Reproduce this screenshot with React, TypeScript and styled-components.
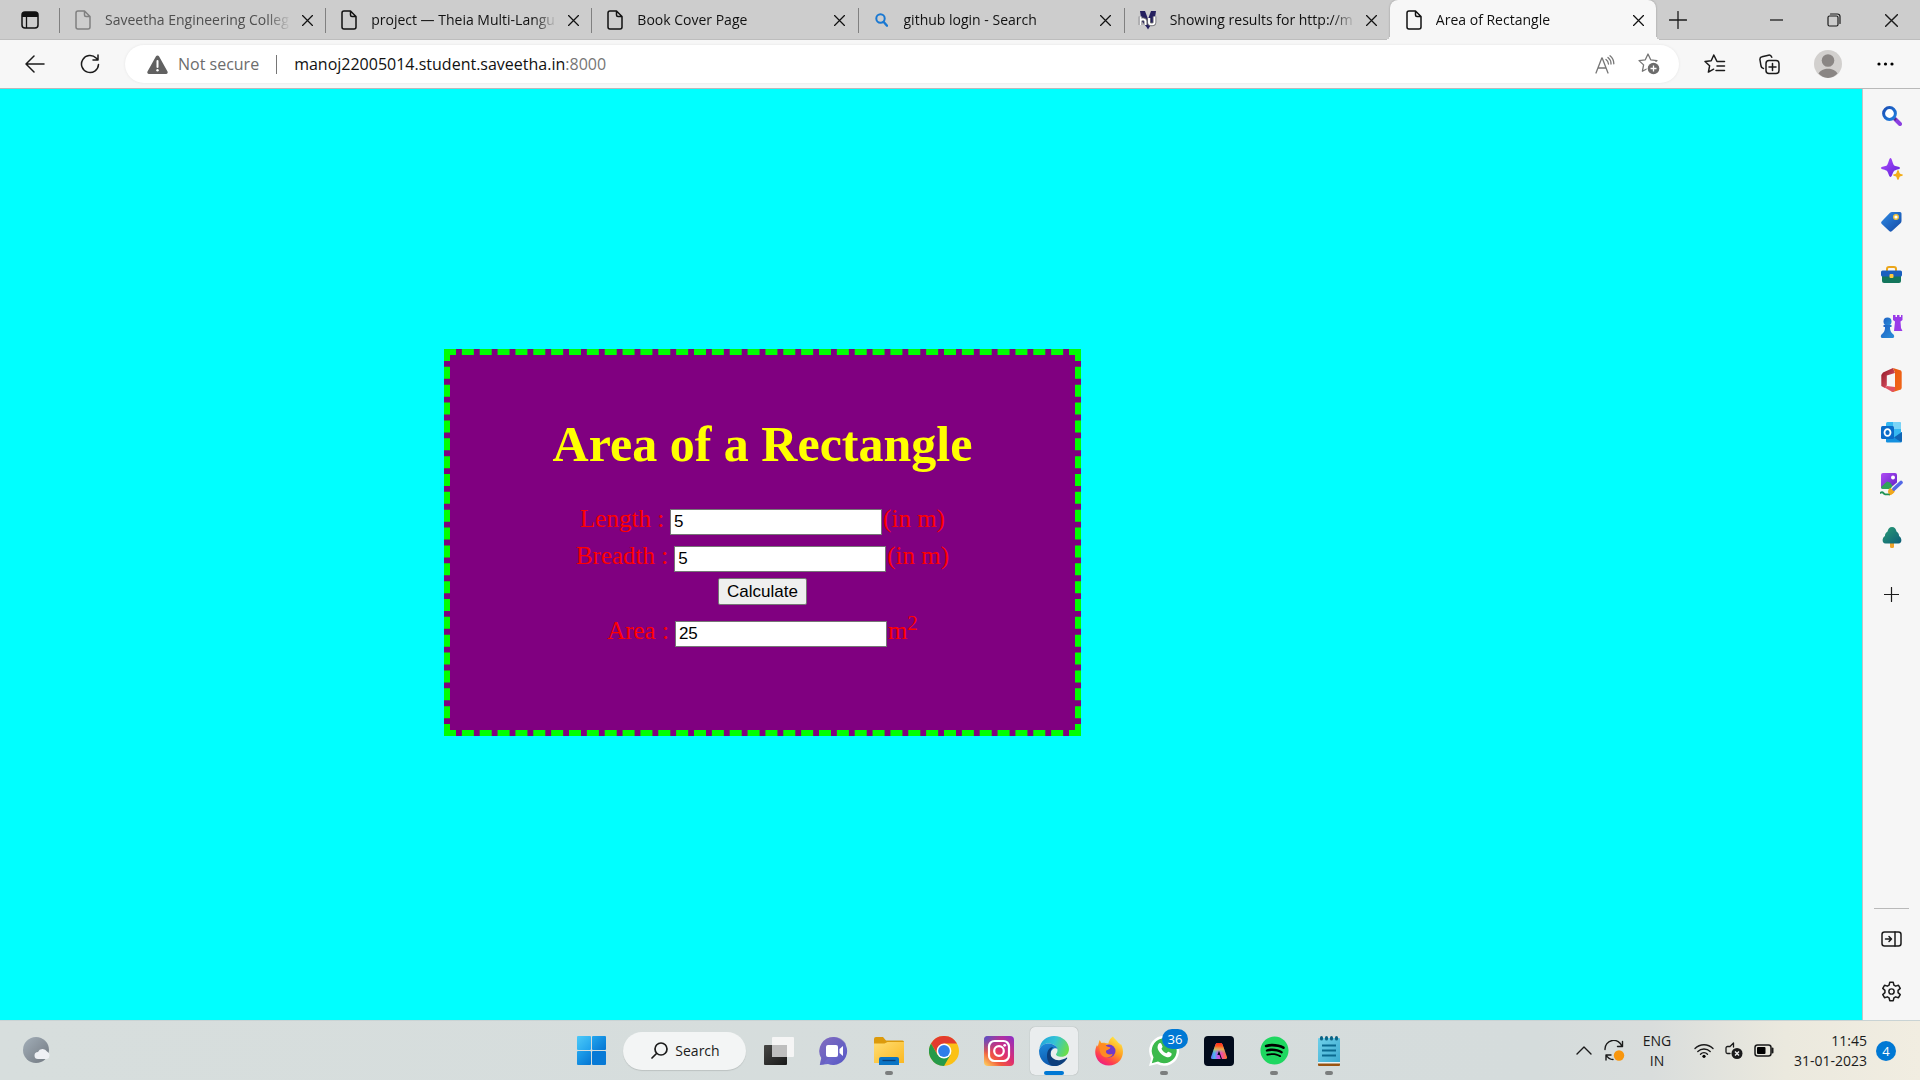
import React, { useState } from "react";
import styled, { createGlobalStyle, css } from "styled-components";
import { FaSpotify } from "react-icons/fa";

const GlobalStyle = createGlobalStyle`
  * { box-sizing: border-box; }
  html, body { margin: 0; padding: 0; }
  body { font-family: "Open Sans", "Noto Sans", sans-serif; color: #1b1b1b; }
  button { font: inherit; color: inherit; }
  svg { display: block; flex: none; }
`;

const Desktop = styled.div`
  display: flex;
  flex-direction: column;
  min-height: 100vh;
`;

/* ---------- Tab strip ---------- */

const TabStrip = styled.header`
  display: flex;
  height: 40px;
  background: #cdcdcd;
  box-shadow: inset 0 -1px 0 #bdbdbd;
`;

const PlainButton = styled.button`
  display: flex;
  align-items: center;
  justify-content: center;
  flex: none;
  padding: 0;
  border: 0;
  background: transparent;
`;

const StripButton = styled(PlainButton)<{ $width: number }>`
  width: ${(p) => p.$width}px;
  height: 40px;
`;

const Tabs = styled.nav`
  display: flex;
  flex: 0 1 1597px;
  min-width: 0;
`;

const Tab = styled.div<{ $active?: boolean; $dim?: boolean }>`
  position: relative;
  display: flex;
  align-items: center;
  flex: 1 1 0;
  min-width: 0;
  padding: 0 8px 0 14px;
  color: ${(p) => (p.$dim ? "#4f4f4f" : "#111")};
  ${(p) =>
    p.$active
      ? css`
          background: #f7f7f7;
          border-radius: 8px 8px 0 0;
          box-shadow: 0 0 2px rgba(0, 0, 0, 0.3);
          clip-path: inset(0 -6px 0 -6px);
          &::before,
          &::after {
            content: "";
            position: absolute;
            bottom: 0;
            width: 5px;
            height: 5px;
          }
          &::before {
            left: -5px;
            background: radial-gradient(circle at 0 0, transparent 5px, #f7f7f7 5px);
          }
          &::after {
            right: -5px;
            background: radial-gradient(circle at 100% 0, transparent 5px, #f7f7f7 5px);
          }
        `
      : css`
          &::before {
            content: "";
            position: absolute;
            left: 0;
            top: 8px;
            width: 1px;
            height: 25px;
            background: #808080;
          }
        `}
`;

const Favicon = styled.span`
  display: flex;
  align-items: center;
  justify-content: center;
  width: 20px;
  flex: none;
`;

const TabTitle = styled.span`
  flex: 1;
  min-width: 0;
  margin: 0 6px 0 12px;
  overflow: hidden;
  white-space: nowrap;
  font-size: 14px;
  line-height: 20px;
  mask-image: linear-gradient(to right, #000 calc(100% - 24px), transparent);
`;

const TabClose = styled(PlainButton)`
  width: 20px;
  height: 20px;
  color: #111;
`;

const WindowControls = styled.div`
  display: flex;
  margin-left: auto;
`;

/* ---------- Toolbar ---------- */

const Toolbar = styled.div`
  display: flex;
  align-items: center;
  height: 49px;
  padding: 0 7px;
  background: #f7f7f7;
  border-bottom: 1px solid #b9b9b9;
`;

const ToolButton = styled(PlainButton)`
  width: 55px;
  height: 40px;
`;

const ProfileButton = styled(ToolButton)`
  margin: 0 3px;
`;

const AddressBar = styled.div`
  display: flex;
  align-items: center;
  flex: 1;
  min-width: 0;
  height: 38px;
  margin: 0 8px;
  padding: 0 8px 0 22px;
  background: #fff;
  border-radius: 19px;
  box-shadow: 0 0 3px rgba(0, 0, 0, 0.08);
  font-size: 16px;
  line-height: 24px;
  white-space: nowrap;
`;

const Security = styled.span`
  display: flex;
  align-items: center;
  gap: 10px;
  padding-right: 18px;
  margin-right: 17px;
  color: #6c6c6c;
  position: relative;
  &::after {
    content: "";
    position: absolute;
    right: 0;
    top: 3px;
    width: 1px;
    height: 19px;
    background: #767676;
  }
`;

const Url = styled.span`
  flex: 1;
  color: #111;
`;

const Port = styled.span`
  color: #767676;
`;

const AddressButton = styled(PlainButton)`
  width: 44px;
  height: 36px;
`;

/* ---------- Page and sidebar ---------- */

const Body = styled.div`
  display: flex;
  flex: 1;
`;

const Page = styled.main`
  flex: 1;
  min-width: 0;
  background: cyan;
  padding: 260px 0 0 444px;
`;

const Card = styled.form`
  width: 637px;
  max-width: 100%;
  padding: 61px 0 81px;
  background: purple;
  border: 6px dashed lime;
  font-family: "Liberation Serif", "Times New Roman", serif;
  text-align: center;
`;

const Title = styled.h1`
  margin: 0 0 27px;
  color: yellow;
  font-size: 50px;
  line-height: 57px;
`;

const Row = styled.div`
  display: flex;
  align-items: baseline;
  justify-content: center;
  height: 37px;
  color: red;
  font-size: 25px;
  line-height: 37px;
`;

const ButtonRow = styled(Row)`
  align-items: flex-start;
  height: 38px;
  padding-top: 4px;
`;

const Label = styled.label`
  margin-right: 6px;
`;

const Unit = styled.span`
  margin-left: 1px;
`;

const NumberBox = styled.input`
  width: 212px;
  height: 26px;
  padding: 1px 3px;
  border: 1px solid #767676;
  background: #fff;
  color: #000;
  font-family: "Liberation Sans", Arial, sans-serif;
  font-size: 17px;
`;

const Superscript = styled.sup`
  font-size: 21px;
  line-height: 0;
`;

const Calculate = styled.button`
  height: 27px;
  padding: 0 8px;
  border: 1px solid #767676;
  border-radius: 2px;
  background: #efefef;
  color: #000;
  font-family: "Liberation Sans", Arial, sans-serif;
  font-size: 17px;
  line-height: 20px;
`;

const Sidebar = styled.aside`
  display: flex;
  flex-direction: column;
  align-items: center;
  width: 58px;
  flex: none;
  background: #f6f6f6;
  border-left: 1px solid #c4c4c4;
`;

const SideApps = styled.div`
  display: grid;
  grid-template-rows: repeat(9, 1fr);
  height: 475px;
  padding-top: 1px;
`;

const SideButton = styled(PlainButton)`
  width: 48px;
`;

const SideAdd = styled(SideButton)`
  height: 60px;
`;

const SideFooter = styled.div`
  display: flex;
  flex-direction: column;
  align-items: center;
  margin-top: auto;
  padding: 3px 0 2px;
  border-top: 1px solid #b9b9b9;
  width: 35px;
`;

const FooterButton = styled(SideButton)`
  height: 53px;
`;

/* ---------- Taskbar ---------- */

const Taskbar = styled.footer`
  display: grid;
  grid-template-columns: 1fr auto 1fr;
  align-items: center;
  height: 60px;
  border-top: 1px solid #c9d3d4;
  background: linear-gradient(to right, #d7dedd 0%, #d5dcdc 80%, #d9dddc 86%, #ebe9de 93%, #f1ede1 100%);
`;

const Weather = styled(PlainButton)`
  width: 48px;
  height: 48px;
  margin-left: 13px;
`;

const Launchers = styled.div`
  display: flex;
  align-items: center;
  gap: 7px;
`;

const Launcher = styled(PlainButton)<{ $state?: "running" | "active" }>`
  position: relative;
  width: 48px;
  height: 48px;
  border-radius: 5px;
  ${(p) =>
    p.$state === "active" &&
    css`
      background: #eaedee;
      box-shadow: 0 0 1px rgba(0, 0, 0, 0.35);
    `}
  ${(p) =>
    p.$state &&
    css`
      &::after {
        content: "";
        position: absolute;
        left: 50%;
        bottom: 0;
        width: ${p.$state === "active" ? 20 : 8}px;
        height: 4px;
        border-radius: 2px;
        background: ${p.$state === "active" ? "#0078d4" : "#7b7e7e"};
        transform: translateX(-50%);
      }
    `}
`;

const SearchPill = styled(PlainButton)`
  gap: 7px;
  width: 123px;
  height: 38px;
  margin: 0 2px 0 1px;
  padding-left: 2px;
  border-radius: 19px;
  background: #f3f5f5;
  box-shadow: 0 1px 1px rgba(0, 0, 0, 0.12);
  font-size: 14px;
`;

const CountBadge = styled.span`
  position: absolute;
  top: 2px;
  right: 0;
  width: 26px;
  height: 20px;
  border-radius: 10px;
  background: #0078d4;
  color: #fff;
  font-size: 13px;
  line-height: 20px;
  text-align: center;
`;

const Tray = styled.div`
  display: flex;
  align-items: center;
  justify-content: flex-end;
  padding-right: 24px;
`;

const TrayButton = styled(PlainButton)`
  width: 30px;
  height: 48px;
`;

const TrayText = styled.button`
  padding: 0;
  border: 0;
  background: transparent;
  font-size: 14px;
  line-height: 20px;
`;

const Language = styled(TrayText)`
  width: 56px;
  margin-right: 4px;
  text-align: center;
`;

const Clock = styled(TrayText)`
  width: 88px;
  text-align: right;
`;

const Line = styled.span`
  display: block;
`;

const Notifications = styled(PlainButton)`
  width: 20px;
  height: 20px;
  margin-left: 9px;
  border-radius: 50%;
  background: #0078d4;
  color: #fff;
  font-size: 13px;
`;

/* ---------- Icons ---------- */

const stroke = (w = 1.4) => ({
  fill: "none",
  stroke: "currentColor",
  strokeWidth: w,
  strokeLinecap: "round" as const,
  strokeLinejoin: "round" as const,
});

const Svg = ({ w, h = w, vb, children }: { w: number; h?: number; vb?: string; children: React.ReactNode }) => (
  <svg width={w} height={h} viewBox={vb ?? `0 0 ${w} ${h}`} aria-hidden="true">
    {children}
  </svg>
);

const PageIcon = ({ color = "#111" }: { color?: string }) => (
  <Svg w={16} h={20}>
    <path d="M3 1h6.5L15 6.500V17a2 2 0 0 1-2 2H3a2 2 0 0 1-2-2V3a2 2 0 0 1 2-2zM9.500 1v4a1.500 1.500 0 0 0 1.500 1.500h4" fill="none" stroke={color} strokeWidth="1.5" strokeLinejoin="round" />
  </Svg>
);

const CloseIcon = ({ size = 11 }: { size?: number }) => (
  <Svg w={size} vb="0 0 10 10">
    <path d="M.5.5l9 9M9.500.5l-9 9" {...stroke(1.1)} />
  </Svg>
);

const TabActionsIcon = () => (
  <Svg w={18} h={18}>
    <rect x="1" y="1" width="16" height="16" rx="3" fill="none" stroke="#111" strokeWidth="1.5" />
    <path d="M1 6V4a3 3 0 0 1 3-3h10a3 3 0 0 1 3 3v2z" fill="#111" />
    <path d="M5.500 5v12" stroke="#111" strokeWidth="1.3" />
  </Svg>
);

const SearchFavicon = () => (
  <Svg w={13} h={14}>
    <circle cx="5.500" cy="5.500" r="4.200" fill="none" stroke="#1978d2" strokeWidth="2" />
    <path d="M8.500 8.800l3.500 3.900" stroke="#1978d2" strokeWidth="2.400" strokeLinecap="round" />
  </Svg>
);

const UniversityFavicon = () => (
  <Svg w={20} h={20}>
    <path d="M2 1h5l3 8 3-8h5l-1.500 10L11.500 17 10 19.500 8.500 17 3.500 11z" fill="#25205f" />
    <g fill="none" stroke="#6d6d72" strokeWidth="3.600">
      <path d="M2.500 15V6.500M2.500 10.500c1.500-2 5-1.500 5 1V15" />
      <path d="M11 8v4.500c0 2.500 5.500 2.500 5.500 0V6.500" />
    </g>
    <g fill="none" stroke="#fff" strokeWidth="1.900">
      <path d="M2.500 15V6.500M2.500 10.500c1.500-2 5-1.500 5 1V15" />
      <path d="M11 8v4.500c0 2.500 5.500 2.500 5.500 0V6.500" />
    </g>
  </Svg>
);

const starPath = "M10 1l2.700 5.800 6.300.8-4.600 4.300 1.200 6.300L10 15.200 4.400 18.200l1.200-6.300L1 7.600l6.300-.8z";

const BackIcon = () => (
  <Svg w={20} h={18}><path d="M9 1L1 9l8 8M1 9h18" {...stroke(1.5)} /></Svg>
);
const ReloadIcon = () => (
  <Svg w={20} h={20}><path d="M18.500 10.500a8.500 8.500 0 1 1-2.400-6.400L18 6M18 1v5h-5" {...stroke(1.5)} /></Svg>
);
const WarningIcon = () => (
  <Svg w={21} h={19}>
    <path d="M9 1.300a1.700 1.700 0 0 1 3 0l8.500 15.200a1.600 1.600 0 0 1-1.500 2.400H2a1.600 1.600 0 0 1-1.500-2.400z" fill="#616161" />
    <path d="M10.500 6v6" stroke="#fff" strokeWidth="2" strokeLinecap="round" />
    <circle cx="10.500" cy="15.200" r="1.200" fill="#fff" />
  </Svg>
);
const ReadAloudIcon = () => (
  <Svg w={20} h={19}>
    <g {...stroke(1.3)} stroke="#767676">
      <path d="M1 18L6.800 3h.4L13 18M3 13h8" />
      <path d="M11 4.500a6 6 0 0 1 2.500 4.500M13 2.500a8 8 0 0 1 3 6.500M15 .8a10 10 0 0 1 3.800 8" />
    </g>
  </Svg>
);
const AddFavoriteIcon = () => (
  <Svg w={22} h={22}>
    <path d={starPath} fill="none" stroke="#767676" strokeWidth="1.3" strokeLinejoin="round" />
    <circle cx="15.500" cy="15.500" r="7" fill="#fff" />
    <circle cx="15.500" cy="15.500" r="5.800" fill="#6c6c6c" />
    <path d="M15.500 12.500v6M12.500 15.500h6" stroke="#fff" strokeWidth="1.300" />
  </Svg>
);
const FavoritesIcon = () => (
  <Svg w={22} h={20}>
    <path d="M20.500 7.500H13L9.800 1 7.200 6.700 1 7.500l4.600 4.300-1.200 6.300 5.200-2.900M13 12h7.500M12 16.500h8.500" {...stroke(1.5)} />
  </Svg>
);
const CollectionsIcon = () => (
  <Svg w={21} h={21}>
    <path d="M4.500 14.500c-2-.2-2.300-1.500-2.500-2.500L1 6c-.3-1.800.5-2.900 2-3.200l6.500-1.600c1.500-.4 2.600.3 3.300 2" {...stroke(1.5)} />
    <rect x="7" y="6.500" width="13" height="13" rx="3" {...stroke(1.5)} />
    <path d="M13.500 9.500v7M10 13h7" {...stroke(1.5)} />
  </Svg>
);
const ProfileIcon = () => (
  <Svg w={28} h={28}>
    <circle cx="14" cy="14" r="14" fill="#d2d0ce" />
    <circle cx="14" cy="10.500" r="6.300" fill="#8a8684" />
    <path d="M4.500 23.500c3-6.500 16-6.500 19 0A14 14 0 0 1 14 28a14 14 0 0 1-9.500-4.500z" fill="#8a8684" />
  </Svg>
);
const MoreIcon = () => (
  <Svg w={17} h={4}><circle cx="2" cy="2" r="1.600" /><circle cx="8.500" cy="2" r="1.600" /><circle cx="15" cy="2" r="1.600" /></Svg>
);

const Gradient = ({ id, from, to }: { id: string; from: string; to: string }) => (
  <linearGradient id={id} x1="0" y1="0" x2="1" y2="1">
    <stop offset="0" stopColor={from} />
    <stop offset="1" stopColor={to} />
  </linearGradient>
);

const sideApps: { name: string; icon: React.ReactNode }[] = [
  {
    name: "Search",
    icon: (
      <Svg w={20} h={20}>
        <Gradient id="lens" from="#1b4fb5" to="#1f7fe0" />
        <path d="M13 13l5 5" stroke="#8b3fe0" strokeWidth="4" strokeLinecap="round" />
        <path d="M11.500 11.500l2.500 2.500" stroke="#5b2f84" strokeWidth="2.500" />
        <circle cx="7.500" cy="7.500" r="5.900" fill="#fff" stroke="url(#lens)" strokeWidth="3" />
      </Svg>
    ),
  },
  {
    name: "Discover",
    icon: (
      <Svg w={22} h={22}>
        <Gradient id="spark" from="#b14cff" to="#5a22d6" />
        <path d="M9.500 0c1.500 0 2.200 6 3.500 7.300S19 8.500 19 10s-4.700 1.700-6 3-2 6-3.500 6-2.200-4.700-3.500-6-6-1.500-6-3 4.700-1.400 6-2.700S8 0 9.500 0z" fill="url(#spark)" />
        <path d="M17 12c1 0 1.200 2.800 1.900 3.500s3.100.5 3.100 1.500-2.400.9-3.100 1.600S18 22 17 22s-1.200-2.700-1.900-3.400S12 18 12 17s2.400-.8 3.100-1.500S16 12 17 12z" fill="#f3ad18" />
      </Svg>
    ),
  },
  {
    name: "Shopping",
    icon: (
      <Svg w={21} h={21}>
        <Gradient id="tag" from="#2f8ce6" to="#1347a3" />
        <path d="M11 1l8 0a1.500 1.500 0 0 1 1.500 1.500V10a3 3 0 0 1-1 2.200L11 20a2 2 0 0 1-2.800 0L.8 13a2 2 0 0 1 0-2.800L9 1.800A3 3 0 0 1 11 1z" fill="url(#tag)" />
        <circle cx="15" cy="6" r="2.300" fill="#fff" stroke="#f0c23a" strokeWidth="1.400" />
      </Svg>
    ),
  },
  {
    name: "Tools",
    icon: (
      <Svg w={21} h={17}>
        <path d="M6 5V3a2 2 0 0 1 2-2h5a2 2 0 0 1 2 2v2" fill="none" stroke="#eba61b" strokeWidth="2" />
        <path d="M1 8h19v7a2 2 0 0 1-2 2H3a2 2 0 0 1-2-2z" fill="#13765c" />
        <rect x="0" y="4.500" width="21" height="6" rx="1.500" fill="#1a5fc0" />
        <rect x="8.500" y="8" width="4" height="4" rx="1" fill="#ffc83d" />
      </Svg>
    ),
  },
  {
    name: "Games",
    icon: (
      <Svg w={23} h={23}>
        <Gradient id="pawn" from="#1e5fc4" to="#2a8fd8" />
        <path d="M13 0h2.500v2H17V0h2.500v2H21V0h1.500v5l-2 1.500.5 6.500 1.500 3H14l1-9.500-2-1.500z" fill="#9a3ae8" />
        <circle cx="7.500" cy="6.500" r="4" fill="url(#pawn)" />
        <path d="M3.500 10h8v2h-1.500c0 4 1 5.500 3.500 7.500 1 1 1 3.500-.5 3.500H2c-1.500 0-1.500-2.500-.5-3.500C4 17.500 5 16 5 12H3.500z" fill="url(#pawn)" />
      </Svg>
    ),
  },
  {
    name: "Microsoft 365",
    icon: (
      <Svg w={21} h={24}>
        <Gradient id="officeL" from="#8e1524" to="#ee5f73" />
        <Gradient id="officeR" from="#e8590c" to="#f2661b" />
        <path d="M12 0L2 4.500.3 7v11l3.500 2 2-2.500V7.500L14 5z" fill="url(#officeL)" />
        <path d="M12 0l8 2.500.7 1.500v16l-.7 1.500L12 24l-2-1 4-2V4.500z" fill="url(#officeR)" />
        <path d="M3.500 19.500L6 18l8 1v3.500L11.500 24z" fill="#e05263" />
      </Svg>
    ),
  },
  {
    name: "Outlook",
    icon: (
      <Svg w={21} h={21}>
        <rect x="5" y="0" width="15" height="15" rx="1.500" fill="#35b8f1" />
        <path d="M12 0h6.500A1.500 1.500 0 0 1 20 1.500V7h-8z" fill="#7ad4f7" />
        <path d="M5 10l8 5.500 8-5.500v9a1.500 1.500 0 0 1-1.500 1.500H6.500A1.500 1.500 0 0 1 5 18.500z" fill="#1490df" />
        <path d="M13 15.500l8-5.500v9l-1 1z" fill="#1066b5" />
        <rect x="0" y="4" width="13" height="13" rx="1.500" fill="#0a6cc9" />
        <ellipse cx="6.500" cy="10.500" rx="3" ry="3.400" fill="none" stroke="#fff" strokeWidth="1.800" />
      </Svg>
    ),
  },
  {
    name: "Image Creator",
    icon: (
      <Svg w={23} h={23}>
        <Gradient id="photo" from="#b04cf5" to="#5f1fc4" />
        <rect x="1" y="0" width="16" height="16" rx="2" fill="url(#photo)" />
        <path d="M1 14l6-5.500 3 1 5 6.500H3a2 2 0 0 1-2-2z" fill="#2fa35a" />
        <circle cx="13" cy="4.500" r="2" fill="#fff" />
        <path d="M9 22l-1-3c0-4 3-5 5-3s1 5-4 6z" fill="#f0a81c" />
        <path d="M14 15.500l7-6" stroke="#f6f6f6" strokeWidth="5.500" strokeLinecap="round" />
        <path d="M9 22.500c0-4 1-7 4-7s3 5-4 7z" fill="#f0a81c" />
        <path d="M14 16L21 9.500" stroke="#5368e6" strokeWidth="3.600" strokeLinecap="round" />
        <path d="M0 20c3-2 3 0 4.500 1S7 21 9 21.500" fill="none" stroke="#1f9254" strokeWidth="1.800" strokeLinecap="round" />
      </Svg>
    ),
  },
  {
    name: "Browser essentials",
    icon: (
      <Svg w={20} h={21}>
        <Gradient id="tree" from="#2a9d74" to="#0d5d78" />
        <rect x="8" y="14" width="4" height="7" rx="1.500" fill="#f0a32a" />
        <path d="M10 0c2.500 0 4 2 4.500 4.500C17 6 17 8 17 9c3 1.500 3.500 7-.5 7.500h-13C-.5 16 0 10.500 3 9c0-1 0-3 2.500-4.500C6 2 7.500 0 10 0z" fill="url(#tree)" />
      </Svg>
    ),
  },
];

const GearIcon = () => (
  <Svg w={21} h={21} vb="0 0 24 24">
    <path d="M10 1.500h4l.8 3.300 1.900 1.100 3.300-1 2 3.500-2.500 2.300v2.600l2.500 2.300-2 3.500-3.300-1-1.900 1.100-.8 3.300h-4l-.8-3.300-1.900-1.100-3.300 1-2-3.500 2.500-2.300v-2.600L2 8.400l2-3.500 3.300 1 1.900-1.100z" {...stroke(1.7)} />
    <circle cx="12" cy="12" r="3" {...stroke(1.7)} />
  </Svg>
);
const HideSidebarIcon = () => (
  <Svg w={21} h={16}>
    <rect x="1" y="1" width="19" height="14" rx="2.500" {...stroke(1.5)} />
    <path d="M14 1v14M4.500 8h6M8 5.500L10.500 8 8 10.500" {...stroke(1.5)} />
  </Svg>
);

const WindowsIcon = () => (
  <Svg w={29} h={29}>
    <Gradient id="winA" from="#4cc9f8" to="#1fa1ec" />
    <Gradient id="winB" from="#22a5ee" to="#0575d2" />
    <rect width="14" height="14" rx="1" fill="url(#winA)" />
    <rect x="15" width="14" height="14" rx="1" fill="url(#winB)" />
    <rect y="15" width="14" height="14" rx="1" fill="url(#winB)" />
    <rect x="15" y="15" width="14" height="14" rx="1" fill="#087ad6" />
  </Svg>
);
const TaskViewIcon = () => (
  <Svg w={30} h={28}>
    <Gradient id="tv" from="#474745" to="#191919" />
    <rect y="8" width="23" height="20" rx="1" fill="url(#tv)" />
    <rect x="8" width="22" height="20" rx="1" fill="#f5f5f5" />
    <path d="M8 8h15v12H9a1 1 0 0 1-1-1z" fill="#bebebe" />
  </Svg>
);
const ChatIcon = () => (
  <Svg w={30} h={30}>
    <Gradient id="chat" from="#7b5aa6" to="#5059c9" />
    <Gradient id="chat2" from="#8b7fd8" to="#5554c0" />
    <path d="M15 1a14 14 0 1 1-6 27L.8 29l1.500-7A14 14 0 0 1 15 1z" fill="url(#chat2)" />
    <path d="M15 1a14 14 0 0 0-12.700 21L.8 29l4-.5C8 20 20 16 27 8a14 14 0 0 0-12-7z" fill="url(#chat)" opacity=".5" />
    <rect x="7" y="9" width="12" height="12" rx="2" fill="#fff" />
    <path d="M20.500 13l3.500-3v10l-3.500-3z" fill="#fff" />
  </Svg>
);
const ExplorerIcon = () => (
  <Svg w={30} h={28}>
    <linearGradient id="fold" x1="0" y1="0" x2="1" y2="1"><stop stopColor="#ffdd72" /><stop offset="1" stopColor="#fbb822" /></linearGradient>
    <path d="M0 2a2 2 0 0 1 2-2h7l3 3.500h16.500A1.500 1.500 0 0 1 30 5v5H0z" fill="#dc9a0c" />
    <path d="M0 6.500h10.500L13.500 5H30v21H0z" fill="url(#fold)" />
    <path d="M5 28v-6a2 2 0 0 1 2-2h16a2 2 0 0 1 2 2v6z" fill="#0a74c4" />
    <path d="M8.500 23.500h13" stroke="#083f79" strokeWidth="1.300" />
  </Svg>
);
const ChromeIcon = () => (
  <Svg w={30} h={30}>
    <circle cx="15" cy="15" r="15" fill="#fbc116" />
    <path d="M2 7.500A15 15 0 0 1 28 7.500H15L9 19z" fill="#e33b2e" />
    <path d="M2 7.500A15 15 0 0 0 15 30l6.500-11.300H8.500z" fill="#269a49" />
    <circle cx="15" cy="15" r="7.400" fill="#fff" />
    <circle cx="15" cy="15" r="5.900" fill="#2f7de9" />
  </Svg>
);
const InstagramIcon = () => (
  <Svg w={30} h={30}>
    <linearGradient id="ig" x1="1" y1="0" x2=".1" y2="1">
      <stop offset="0" stopColor="#8a2fc9" /><stop offset=".5" stopColor="#de2f70" /><stop offset=".75" stopColor="#f1593e" /><stop offset="1" stopColor="#fdc65a" />
    </linearGradient>
    <radialGradient id="ig2" cx="0" cy="0" r=".6"><stop stopColor="#4a55d0" /><stop offset="1" stopColor="#4a55d0" stopOpacity="0" /></radialGradient>
    <rect width="30" height="30" rx="4" fill="url(#ig)" />
    <rect width="30" height="30" rx="4" fill="url(#ig2)" />
    <rect x="5" y="5" width="20" height="20" rx="5.500" fill="none" stroke="#fff" strokeWidth="2.200" />
    <circle cx="15" cy="15" r="4.800" fill="none" stroke="#fff" strokeWidth="2.200" />
    <circle cx="20.700" cy="9.300" r="1.400" fill="#fff" />
  </Svg>
);
const EdgeIcon = () => (
  <Svg w={30} h={30}>
    <linearGradient id="edgeT" x1="0" y1=".2" x2="1" y2=".5"><stop stopColor="#20a3dc" /><stop offset=".5" stopColor="#33c3d5" /><stop offset="1" stopColor="#6bdd4c" /></linearGradient>
    <linearGradient id="edgeB" x1="0" y1="0" x2=".3" y2="1"><stop stopColor="#1d8bdc" /><stop offset="1" stopColor="#0c58ad" /></linearGradient>
    <path d="M.3 13C1.500 5 7.500 0 15 0c9 0 15 6.500 15 13 0 5-3.500 7.800-7.500 7.800-4 0-5.500-1.600-5.500-2.600 0-.7 1.500-1.500 1.500-4C18.500 10 14 7.500 9.500 7.500 5 7.500 1.500 10 .3 13z" fill="url(#edgeT)" />
    <path d="M.1 14C1.500 9.500 5.500 7.500 9.500 7.500c4.500 0 8.500 2.500 9 5.500-1.500-1.800-7-.5-7 5.500 0 7 7 11 12.500 8-3 2.500-6 3.500-9 3.500C6 30-.6 23 .1 14z" fill="url(#edgeB)" />
    <path d="M8 20c0-6 3-9 6.500-9-2 1.500-3 4-3 6.500 0 4.500 5 7.500 10 6.500 2.500-.5 4.500-1.500 6-2.300.6-.3.9.1.6.7C26 26 21 30 15 30c-4 0-7-5-7-10z" fill="#0d3f7c" />
  </Svg>
);
const FirefoxIcon = () => (
  <Svg w={28} h={30}>
    <linearGradient id="ff" x1=".8" y1="0" x2=".2" y2="1"><stop stopColor="#fff04a" /><stop offset=".45" stopColor="#ff9a1f" /><stop offset=".75" stopColor="#ff3f4e" /><stop offset="1" stopColor="#e9178f" /></linearGradient>
    <path d="M18 .5c1 2 4 4 5.500 6.500 1-.2 1.500 1 1.500 2 .5-.6 1-1 1-1 3 6 2.500 12-1 16.500-6 7-17 6.500-22 0C-.5 19.500-.5 14 2 9l.8 1.500L4.500 4l2 3c1.500-.5 3-.5 4 0l3 .5C13.500 5 16 1.500 18 .5z" fill="url(#ff)" />
    <circle cx="14" cy="15" r="6.500" fill="#7139c9" />
    <path d="M5 7l6 1c-1 1.500 0 2.500 4.500 3.500-1 2.500-4 2-4.500 3.500-.5 3 3 4 6.500 3 0 3-7 5-10.500 1.500C4 16 4 10 5 7z" fill="#ff8a22" />
  </Svg>
);
const WhatsAppIcon = () => (
  <Svg w={30} h={30}>
    <path d="M0 30l2.200-7.600A15 15 0 1 1 8 28z" fill="#fff" />
    <path d="M2.800 27.200l1.700-6A12.500 12.500 0 1 1 9 25.600z" fill="#3cba4c" />
    <path d="M9.500 8c1-1.500 2.500-1 3 0l1 2.500c.3.800-1 1.800-1 2.300 1 2 2.500 3.500 4.800 4.500.6.2 1.400-1.800 2.200-1.500l2.600 1.300c1 .5.500 2.300-.5 3.200-1.500 1.300-3.500 1.200-6.600-.3-3-1.500-5.500-5-6.200-7-.6-2 0-3.700.7-5z" fill="#fff" />
  </Svg>
);
const AdobeExpressIcon = () => (
  <Svg w={30} h={30}>
    <linearGradient id="ae" x1="0" y1="0" x2="1" y2="0"><stop stopColor="#6d5cf5" /><stop offset=".2" stopColor="#45b8f0" /><stop offset=".4" stopColor="#b55cf0" /><stop offset=".65" stopColor="#f04ab0" /><stop offset="1" stopColor="#ff7a1f" /></linearGradient>
    <linearGradient id="ae2" x1="0" y1="0" x2="0" y2="1"><stop stopColor="#ff2a1a" /><stop offset=".2" stopColor="#ff5a1e" /><stop offset=".4" stopColor="#e8d030" stopOpacity=".7" /><stop offset=".65" stopColor="#60e080" stopOpacity="0" /></linearGradient>
    <rect width="30" height="30" rx="4" fill="#020b1c" />
    <path d="M13.500 7h3a2 2 0 0 1 1.900 1.200L23 21c.3 1-.2 2-1.300 2h-3.700l-3-8.500-1.600 4.500h2.100l1.300 4H8.300C7.200 23 6.700 22 7 21l4.600-12.800A2 2 0 0 1 13.500 7z" fill="url(#ae)" />
    <path d="M13.500 7h3a2 2 0 0 1 1.900 1.200L23 21c.3 1-.2 2-1.300 2h-3.700l-3-8.500-1.600 4.500h2.100l1.300 4H8.300C7.200 23 6.700 22 7 21l4.600-12.800A2 2 0 0 1 13.500 7z" fill="url(#ae2)" />
  </Svg>
);

const SpotifyFrame = styled.span`
  display: flex;
  border-radius: 50%;
  background: radial-gradient(circle, #000 12px, transparent 13px);
`;

const SpotifyIcon = () => (
  <SpotifyFrame>
    <FaSpotify size={29} color="#1ed760" aria-hidden="true" />
  </SpotifyFrame>
);
const NotepadIcon = () => (
  <Svg w={22} h={30}>
    <Gradient id="note" from="#6fd0ea" to="#3aa9cf" />
    <rect y="25" width="22" height="5" rx="1" fill="#9a5412" />
    <rect y="2" width="22" height="25" rx="1" fill="url(#note)" />
    <path d="M0 26h22v1.500H0z" fill="#e8f4f8" />
    <path d="M4 9.500h14M4 14.500h14M4 19.500h14" stroke="#0b6a90" strokeWidth="1.800" />
    {[3.5, 8.5, 13.5, 18.5].map((x) => (
      <rect key={x} x={x - 1.5} y="0" width="3" height="4.500" rx="1.500" fill="#0b6283" />
    ))}
  </Svg>
);
const WeatherIcon = () => (
  <Svg w={28} h={27}>
    <Gradient id="moon" from="#a3afb9" to="#717880" />
    <circle cx="13" cy="13" r="13" fill="url(#moon)" />
    <path d="M15 22a3.500 3.500 0 0 1 0-7 5 5 0 0 1 9-.5 4 4 0 0 1 0 7.500z" fill="#eef0f4" />
  </Svg>
);

const launchers: { name: string; icon: React.ReactNode; state?: "running" | "active"; badge?: number }[] = [
  { name: "Task view", icon: <TaskViewIcon /> },
  { name: "Chat", icon: <ChatIcon /> },
  { name: "File Explorer", icon: <ExplorerIcon />, state: "running" },
  { name: "Google Chrome", icon: <ChromeIcon /> },
  { name: "Instagram", icon: <InstagramIcon /> },
  { name: "Microsoft Edge", icon: <EdgeIcon />, state: "active" },
  { name: "Firefox", icon: <FirefoxIcon /> },
  { name: "WhatsApp", icon: <WhatsAppIcon />, state: "running", badge: 36 },
  { name: "Adobe Express", icon: <AdobeExpressIcon /> },
  { name: "Spotify", icon: <SpotifyIcon />, state: "running" },
  { name: "Notepad", icon: <NotepadIcon />, state: "running" },
];

const tabs: { title: string; icon: React.ReactNode; active?: boolean; dim?: boolean }[] = [
  { title: "Saveetha Engineering Colleg", icon: <PageIcon color="#808080" />, dim: true },
  { title: "project — Theia Multi-Langu", icon: <PageIcon /> },
  { title: "Book Cover Page", icon: <PageIcon /> },
  { title: "github login - Search", icon: <SearchFavicon /> },
  { title: "Showing results for http://m", icon: <UniversityFavicon /> },
  { title: "Area of Rectangle", icon: <PageIcon />, active: true },
];

function AreaForm() {
  const [length, setLength] = useState("5");
  const [breadth, setBreadth] = useState("5");
  const [area, setArea] = useState("25");
  return (
    <Card
      onSubmit={(e) => {
        e.preventDefault();
        setArea(String(Number(length) * Number(breadth)));
      }}
    >
      <Title>Area of a Rectangle</Title>
      <Row>
        <Label htmlFor="length">Length :</Label>
        <NumberBox id="length" value={length} onChange={(e) => setLength(e.target.value)} />
        <Unit>(in m)</Unit>
      </Row>
      <Row>
        <Label htmlFor="breadth">Breadth :</Label>
        <NumberBox id="breadth" value={breadth} onChange={(e) => setBreadth(e.target.value)} />
        <Unit>(in m)</Unit>
      </Row>
      <ButtonRow>
        <Calculate type="submit">Calculate</Calculate>
      </ButtonRow>
      <Row>
        <Label htmlFor="area">Area :</Label>
        <NumberBox id="area" value={area} readOnly />
        <Unit>
          m<Superscript>2</Superscript>
        </Unit>
      </Row>
    </Card>
  );
}

export default function App() {
  return (
    <Desktop>
      <GlobalStyle />
      <TabStrip>
        <StripButton $width={59} aria-label="Tab actions"><TabActionsIcon /></StripButton>
        <Tabs aria-label="Tabs">
          {tabs.map((t) => (
            <Tab key={t.title} $active={t.active} $dim={t.dim}>
              <Favicon>{t.icon}</Favicon>
              <TabTitle>{t.title}</TabTitle>
              <TabClose aria-label="Close tab"><CloseIcon /></TabClose>
            </Tab>
          ))}
        </Tabs>
        <StripButton $width={44} aria-label="New tab">
          <Svg w={18}><path d="M9 .5v17M.5 9h17" {...stroke(1.3)} /></Svg>
        </StripButton>
        <WindowControls>
          <StripButton $width={57} aria-label="Minimize">
            <Svg w={13} h={2}><path d="M0 1h13" stroke="#111" strokeWidth="1.200" /></Svg>
          </StripButton>
          <StripButton $width={57} aria-label="Restore">
            <Svg w={14} h={14}>
              <rect x="1" y="3" width="10" height="10" rx="1.500" {...stroke(1.2)} />
              <path d="M3.500 1h7A2.500 2.500 0 0 1 13 3.500v7" {...stroke(1.2)} />
            </Svg>
          </StripButton>
          <StripButton $width={58} aria-label="Close window"><CloseIcon size={13} /></StripButton>
        </WindowControls>
      </TabStrip>

      <Toolbar>
        <ToolButton aria-label="Back"><BackIcon /></ToolButton>
        <ToolButton aria-label="Refresh"><ReloadIcon /></ToolButton>
        <AddressBar>
          <Security><WarningIcon />Not secure</Security>
          <Url>manoj22005014.student.saveetha.in<Port>:8000</Port></Url>
          <AddressButton aria-label="Read aloud"><ReadAloudIcon /></AddressButton>
          <AddressButton aria-label="Add to favorites"><AddFavoriteIcon /></AddressButton>
        </AddressBar>
        <ToolButton aria-label="Favorites"><FavoritesIcon /></ToolButton>
        <ToolButton aria-label="Collections"><CollectionsIcon /></ToolButton>
        <ProfileButton aria-label="Profile"><ProfileIcon /></ProfileButton>
        <ToolButton aria-label="Settings and more"><MoreIcon /></ToolButton>
      </Toolbar>

      <Body>
        <Page><AreaForm /></Page>
        <Sidebar>
          <SideApps>
            {sideApps.map((a) => (
              <SideButton key={a.name} aria-label={a.name}>{a.icon}</SideButton>
            ))}
          </SideApps>
          <SideAdd aria-label="Add app">
            <Svg w={15}><path d="M7.500.5v14M.5 7.500h14" {...stroke(1.2)} /></Svg>
          </SideAdd>
          <SideFooter>
            <FooterButton aria-label="Hide sidebar"><HideSidebarIcon /></FooterButton>
            <FooterButton aria-label="Settings"><GearIcon /></FooterButton>
          </SideFooter>
        </Sidebar>
      </Body>

      <Taskbar>
        <Weather aria-label="Weather"><WeatherIcon /></Weather>
        <Launchers>
          <Launcher aria-label="Start"><WindowsIcon /></Launcher>
          <SearchPill>
            <Svg w={17} h={17}>
              <circle cx="10" cy="7" r="6" {...stroke(1.7)} />
              <path d="M5.500 11.500L1 16" {...stroke(1.7)} />
            </Svg>
            Search
          </SearchPill>
          {launchers.map((l) => (
            <Launcher key={l.name} aria-label={l.name} $state={l.state}>
              {l.icon}
              {l.badge && <CountBadge>{l.badge}</CountBadge>}
            </Launcher>
          ))}
        </Launchers>
        <Tray>
          <TrayButton aria-label="Show hidden icons">
            <Svg w={16} h={9}><path d="M1 8l7-7 7 7" {...stroke(1.4)} /></Svg>
          </TrayButton>
          <TrayButton aria-label="Update available">
            <Svg w={21} h={21}>
              <path d="M1 9.500a8.700 8.700 0 0 1 17-3M18.500 1.500v5h-5M2 20v-5h5M2 15c1.500 2.500 4 4.500 7 4.500" {...stroke(1.4)} />
              <circle cx="15" cy="15.500" r="5.200" fill="#f8960e" />
            </Svg>
          </TrayButton>
          <Language><Line>ENG</Line><Line>IN</Line></Language>
          <TrayButton aria-label="Wi-Fi">
            <Svg w={20} h={15}>
              <path d="M1 5.500a12.700 12.700 0 0 1 18 0M3.800 8.500a8.800 8.800 0 0 1 12.400 0M6.500 11.200a5 5 0 0 1 7 0" {...stroke(1.4)} />
              <circle cx="10" cy="13.300" r="1.600" />
            </Svg>
          </TrayButton>
          <TrayButton aria-label="Volume muted">
            <Svg w={18} h={17}>
              <path d="M8.500 1v4M8.500 1L5 4.500H2.500A1.500 1.500 0 0 0 1 6v4a1.500 1.500 0 0 0 1.500 1.500H5" {...stroke(1.3)} />
              <circle cx="12" cy="11.500" r="5.500" fill="#1b1b1b" />
              <path d="M10 9.500l4 4M14 9.500l-4 4" stroke="#eee" strokeWidth="1.400" />
            </Svg>
          </TrayButton>
          <TrayButton aria-label="Battery">
            <Svg w={20} h={13}>
              <rect x="1" y="1" width="16" height="11" rx="2.500" {...stroke(1.5)} />
              <rect x="3" y="3" width="8.500" height="7" rx="1" />
              <path d="M18.500 4.500v4" {...stroke(2)} />
            </Svg>
          </TrayButton>
          <Clock><Line>11:45</Line><Line>31-01-2023</Line></Clock>
          <Notifications aria-label="4 notifications">4</Notifications>
        </Tray>
      </Taskbar>
    </Desktop>
  );
}
